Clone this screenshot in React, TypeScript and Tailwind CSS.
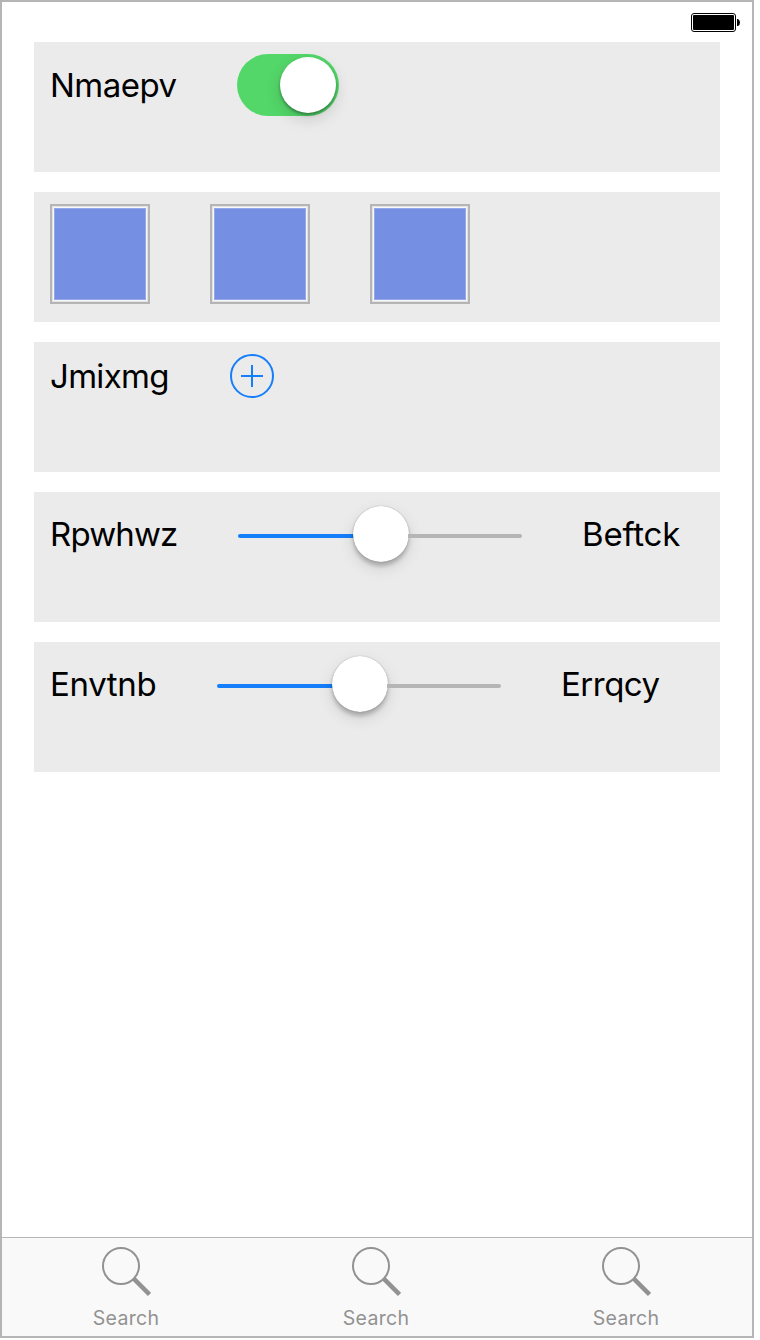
import type { ReactNode } from "react";

function Panel({ children }: { children: ReactNode }) {
  return <section className="flex h-[130px] items-start bg-[#ebebeb] pl-4 pt-3">{children}</section>;
}

type LabelProps = { text: string; width: string; tracking: string };

function Label({ text, width, tracking }: LabelProps) {
  return (
    <span
      className={`shrink-0 whitespace-nowrap text-[33px] leading-[40px] text-black [font-variant-ligatures:none] ${width} ${tracking}`}
    >
      {text}
    </span>
  );
}

function Battery() {
  return (
    <svg width="50" height="20" viewBox="0 0 50 20" className="block">
      <rect x="0.5" y="0.5" width="44" height="18" rx="2.5" fill="white" stroke="black" />
      <rect x="2" y="2" width="41" height="15" rx="1" fill="black" />
      <path d="M46 6h1q2 1 2 3.500t-2 3.500h-1z" fill="black" />
    </svg>
  );
}

function Toggle() {
  return (
    <div className="flex h-[62px] w-[102px] items-center justify-end rounded-full bg-[#53d769] pr-[3px]">
      <div className="size-14 rounded-full bg-white shadow-[0_6px_16px_rgba(0,0,0,0.15),0_2px_3px_rgba(0,0,0,0.35)]" />
    </div>
  );
}

function Swatch() {
  return (
    <div className="size-[100px] border-2 border-[#b5b5b5] bg-[#e2e2e2] p-px">
      <div className="size-full border border-[#f8f8fc] bg-[#758fe3] shadow-[inset_0_0_0_1px_#92a6ea]" />
    </div>
  );
}

function PlusButton() {
  return (
    <svg width="44" height="44" viewBox="0 0 44 44" fill="none" stroke="#157efb" strokeWidth="2" className="block">
      <circle cx="22" cy="22" r="21" />
      <path d="M11 22h22M22 11v22" />
    </svg>
  );
}

function Slider() {
  return (
    <div className="flex h-14 w-[284px] shrink-0 items-center">
      <div className="mt-1 h-1 w-[116px] rounded-l-full bg-[#157efb]" />
      <div className="-mx-px size-14 shrink-0 rounded-full bg-white shadow-[0_6px_16px_rgba(0,0,0,0.12),0_0_1px_rgba(0,0,0,0.4),0_4px_4px_rgba(0,0,0,0.22)]" />
      <div className="mt-1 h-1 min-w-0 flex-1 rounded-r-full bg-[#b5b5b5]" />
    </div>
  );
}

function SearchTab() {
  return (
    <button className="flex w-[250px] flex-col items-center pr-0.5 pt-[9px] text-[#929292]">
      <svg width="50" height="50" viewBox="0 0 50 50" fill="none" stroke="currentColor" className="block">
        <circle cx="20" cy="19" r="18" strokeWidth="2" />
        <path d="M32.700 31.700 48.500 47.500" strokeWidth="4.500" />
      </svg>
      <span className="mt-[9px] text-[19.500px] leading-6 tracking-[0.3px]">Search</span>
    </button>
  );
}

export default function App() {
  return (
    <div className="h-[1340px] w-[760px] overflow-hidden bg-white font-['Inter',sans-serif]">
      <div className="flex h-[1338px] w-[754px] flex-col border-2 border-[#b5b5b5] bg-white">
        <header className="flex h-10 justify-end pr-[11px] pt-[11px]">
          <Battery />
        </header>
        <main className="flex flex-1 flex-col gap-5 px-8">
          <Panel>
            <div className="flex items-center gap-[60px]">
              <Label text="Nmaepv" width="w-[127px]" tracking="tracking-[-0.5px]" />
              <Toggle />
            </div>
          </Panel>
          <Panel>
            <div className="flex gap-[60px]">
              <Swatch />
              <Swatch />
              <Swatch />
            </div>
          </Panel>
          <Panel>
            <div className="flex items-center gap-[60px]">
              <Label text="Jmixmg" width="w-[120px]" tracking="tracking-[-0.7px]" />
              <PlusButton />
            </div>
          </Panel>
          <Panel>
            <div className="flex items-center gap-[60px] pt-0.5">
              <Label text="Rpwhwz" width="w-[128px]" tracking="tracking-[-0.85px]" />
              <Slider />
              <Label text="Beftck" width="w-[100px]" tracking="tracking-[-0.2px]" />
            </div>
          </Panel>
          <Panel>
            <div className="flex items-center gap-[60px] pt-0.5">
              <Label text="Envtnb" width="w-[107px]" tracking="tracking-[-0.35px]" />
              <Slider />
              <Label text="Errqcy" width="w-[100px]" tracking="tracking-[-0.5px]" />
            </div>
          </Panel>
        </main>
        <nav className="flex h-[99px] border-t border-[#b5b5b5] bg-[#f9f9f9]">
          <SearchTab />
          <SearchTab />
          <SearchTab />
        </nav>
      </div>
    </div>
  );
}
